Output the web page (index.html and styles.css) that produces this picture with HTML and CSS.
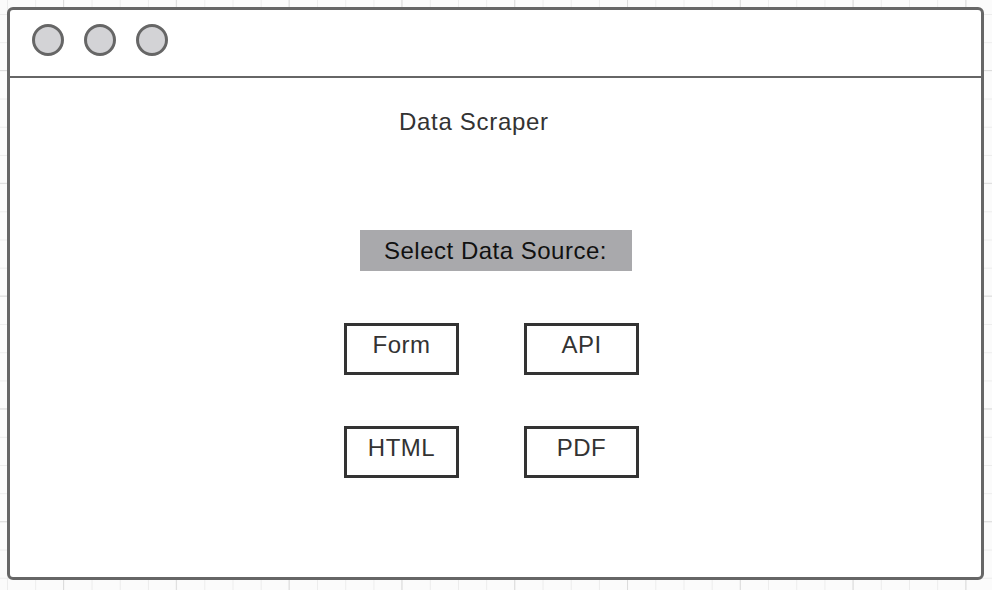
FILE: index.html
```html
<!DOCTYPE html>
<html lang="en">
<head>
    <meta charset="UTF-8">
    <meta name="viewport" content="width=device-width, initial-scale=1.0">
    <title>Data Scraper</title>
    <link rel="stylesheet" href="styles.css">
</head>
<body>
    <div class="window">
        <div class="title-bar">
            <span class="dot"></span>
            <span class="dot"></span>
            <span class="dot"></span>
        </div>
        <div class="content">
            <div class="app-title">Data Scraper</div>
            <div class="source-label">Select Data Source:</div>
            <div class="source-grid">
                <div class="source-button">Form</div>
                <div class="source-button">API</div>
                <div class="source-button">HTML</div>
                <div class="source-button">PDF</div>
            </div>
        </div>
    </div>
</body>
</html>
```

FILE: styles.css
```css
html, body {
    margin: 0;
    height: 100%;
}
body {
    font-family: "Liberation Sans", Arial, sans-serif;
    background-color: #fbfbfb;
    background-image:
        linear-gradient(to right, #dcdcdc 1px, transparent 1px),
        linear-gradient(to bottom, #dcdcdc 1px, transparent 1px),
        linear-gradient(to right, #ececec 1px, transparent 1px),
        linear-gradient(to bottom, #ececec 1px, transparent 1px);
    background-size: 112.8px 112.8px, 112.8px 112.8px, 28.2px 28.2px, 28.2px 28.2px;
    background-position: 63px 70px, 63px 70px, 7px 14px, 7px 14px;
    overflow: hidden;
}
.window {
    box-sizing: border-box;
    margin: 7px;
    width: 977px;
    height: 573px;
    background: white;
    border: 3px solid #666;
    border-radius: 6px;
}
.title-bar {
    height: 68px;
    border-bottom: 2px solid #666;
    display: flex;
    align-items: flex-start;
    gap: 20px;
    padding: 14px 0 0 22px;
    box-sizing: border-box;
}
.dot {
    box-sizing: border-box;
    width: 32px;
    height: 32px;
    border-radius: 50%;
    border: 3px solid #666;
    background-color: #d3d3d6;
}
.content {
    display: flex;
    flex-direction: column;
    align-items: center;
}
.app-title {
    align-self: flex-start;
    margin-top: 30px;
    padding-left: 389px;
    font-size: 24px;
    line-height: 28px;
    letter-spacing: 0.7px;
    color: #333;
}
.source-label {
    margin-top: 94px;
    width: 272px;
    height: 41px;
    line-height: 41px;
    text-align: center;
    background-color: #a9a9ac;
    color: #111;
    font-size: 24px;
    letter-spacing: 0.5px;
}
.source-grid {
    margin-top: 52px;
    margin-right: 8px;
    display: grid;
    grid-template-columns: 115px 115px;
    column-gap: 65px;
    row-gap: 51px;
}
.source-button {
    box-sizing: border-box;
    height: 52px;
    border: 3px solid #333;
    padding-top: 5px;
    text-align: center;
    font-size: 24px;
    line-height: 28px;
    letter-spacing: 0.5px;
    color: #333;
}
```
